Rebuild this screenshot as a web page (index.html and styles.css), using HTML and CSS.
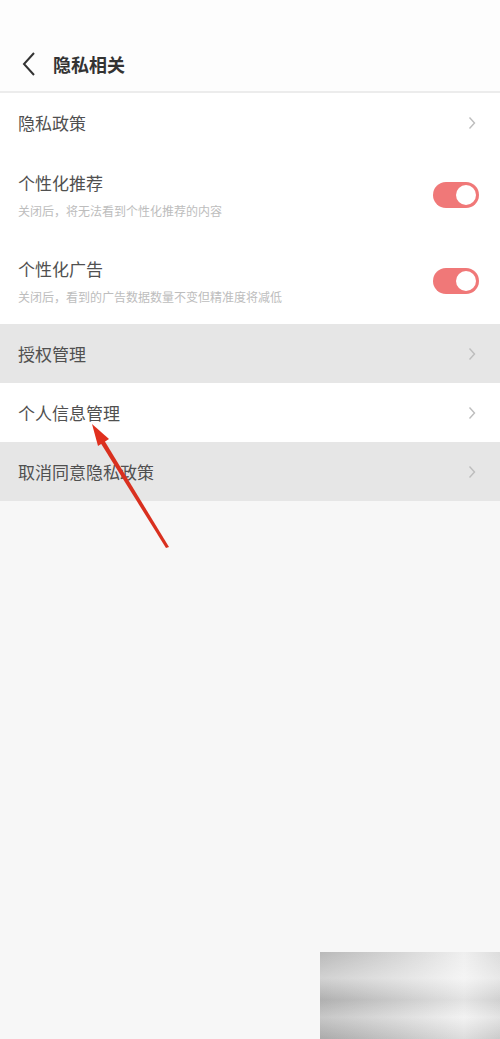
FILE: index.html
```html
<!DOCTYPE html>
<html lang="zh">
<head>
<meta charset="utf-8">
<link rel="stylesheet" href="styles.css">
</head>
<body>
<div class="page">
  <header class="header">
    <svg class="back" width="16" height="26" viewBox="0 0 16 26"><path d="M13 2 L3 13 L13 24" fill="none" stroke="#333" stroke-width="2"/></svg>
    <h1 class="title">隐私相关</h1>
  </header>
  <div class="list">
    <div class="row">
      <span class="label">隐私政策</span>
      <svg class="chev" width="8" height="14" viewBox="0 0 8 14"><path d="M1.5 1.5 L6.5 7 L1.5 12.5" fill="none" stroke="#bdbdbd" stroke-width="1.4"/></svg>
    </div>
    <div class="row row-tall">
      <div class="text">
        <span class="label">个性化推荐</span>
        <span class="sub">关闭后，将无法看到个性化推荐的内容</span>
      </div>
      <div class="toggle"><span class="knob"></span></div>
    </div>
    <div class="row row-tall">
      <div class="text">
        <span class="label">个性化广告</span>
        <span class="sub">关闭后，看到的广告数据数量不变但精准度将减低</span>
      </div>
      <div class="toggle"><span class="knob"></span></div>
    </div>
    <div class="row row-gray">
      <span class="label">授权管理</span>
      <svg class="chev" width="8" height="14" viewBox="0 0 8 14"><path d="M1.5 1.5 L6.5 7 L1.5 12.5" fill="none" stroke="#bdbdbd" stroke-width="1.4"/></svg>
    </div>
    <div class="row">
      <span class="label">个人信息管理</span>
      <svg class="chev" width="8" height="14" viewBox="0 0 8 14"><path d="M1.5 1.5 L6.5 7 L1.5 12.5" fill="none" stroke="#bdbdbd" stroke-width="1.4"/></svg>
    </div>
    <div class="row row-gray">
      <span class="label">取消同意隐私政策</span>
      <svg class="chev" width="8" height="14" viewBox="0 0 8 14"><path d="M1.5 1.5 L6.5 7 L1.5 12.5" fill="none" stroke="#bdbdbd" stroke-width="1.4"/></svg>
    </div>
  </div>
  <svg class="arrow" width="500" height="600" viewBox="0 0 500 600">
    <polygon points="169,547 166,548 100,442 104,440" fill="#d9301f"/>
    <polygon points="92,424 109,439 98,446" fill="#e0301e"/>
  </svg>
  <div class="mosaic"></div>
</div>
</body>
</html>
```
FILE: styles.css
```css
html, body {
  margin: 0;
  padding: 0;
}
body {
  background: #f7f7f7;
  font-family: "Noto Sans CJK SC", "Noto Sans", sans-serif;
}
.page {
  position: relative;
  width: 500px;
  height: 1039px;
  overflow: hidden;
}
.header {
  height: 55px;
  padding-top: 36px;
  display: flex;
  align-items: center;
  background: #fdfdfd;
  border-bottom: 2px solid #ececec;
}
.back {
  margin-left: 21px;
  margin-right: 16px;
}
.title {
  margin: 0;
  font-size: 18px;
  font-weight: 700;
  color: #333;
  line-height: 26px;
}
.list {
  display: flex;
  flex-direction: column;
}
.row {
  height: 59px;
  display: flex;
  align-items: center;
  justify-content: space-between;
  padding: 0 24px 0 18px;
  background: #fff;
}
.row-tall {
  height: 86px;
  align-items: flex-start;
  padding-top: 20px;
  box-sizing: border-box;
  padding-right: 21px;
}
.row-gray {
  background: #e6e6e6;
}
.label {
  font-size: 17px;
  color: #505050;
  line-height: 22px;
}
.text {
  display: flex;
  flex-direction: column;
  gap: 9px;
}
.sub {
  font-size: 12px;
  color: #bdbdbd;
  line-height: 16px;
}
.toggle {
  margin-top: 10px;
  width: 46px;
  height: 26px;
  border-radius: 13px;
  background: #f07878;
  display: flex;
  align-items: center;
  justify-content: flex-end;
  padding-right: 3px;
  box-sizing: border-box;
}
.knob {
  width: 20px;
  height: 20px;
  border-radius: 50%;
  background: #fff;
}
.arrow {
  position: absolute;
  left: 0;
  top: 0;
}
.mosaic {
  position: absolute;
  left: 320px;
  top: 952px;
  width: 180px;
  height: 87px;
  background:
    linear-gradient(180deg, rgba(255,255,255,0) 0%, rgba(255,255,255,0.35) 30%, rgba(0,0,0,0.05) 55%, rgba(255,255,255,0.2) 75%, rgba(0,0,0,0.08) 100%),
    linear-gradient(90deg, #b9b9b9 0%, #c6c6c6 20%, #d6d6d6 45%, #e4e4e4 65%, #efefef 80%, #dcdcdc 100%);
}
```
